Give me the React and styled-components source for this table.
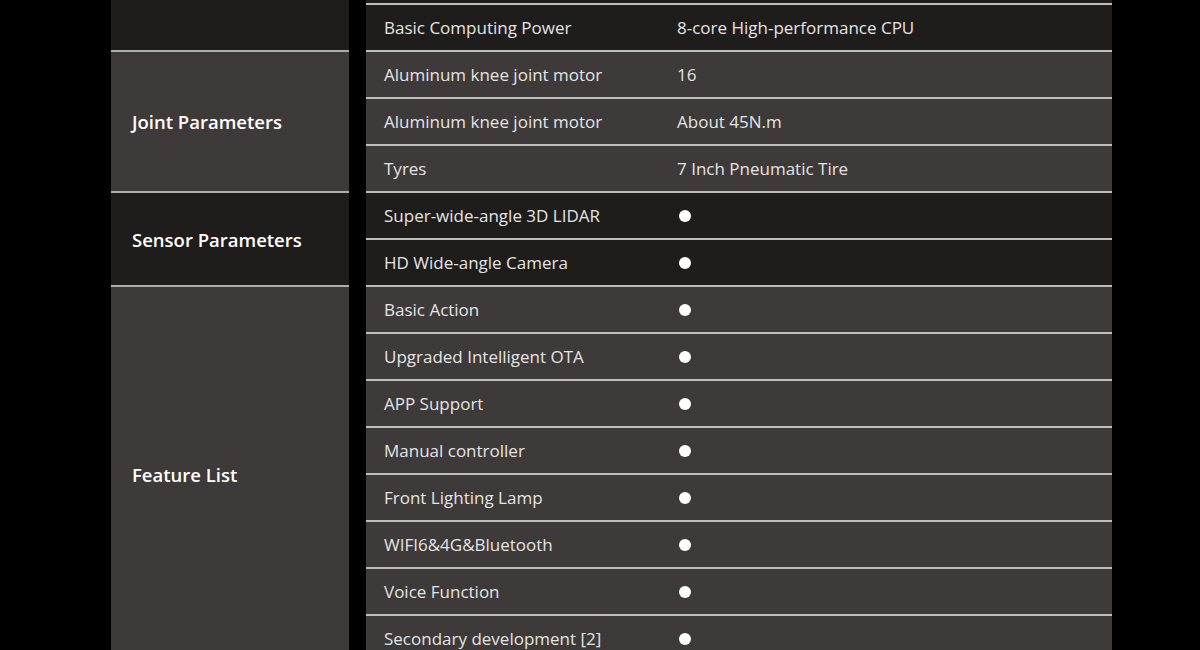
import styled, { createGlobalStyle } from 'styled-components';

// first group is scrolled above the window: only its last row shows
const specs = [
  {
    title: '',
    tone: 'dark',
    rows: [
      ['', ''],
      ['Basic Computing Power', '8-core High-performance CPU'],
    ],
  },
  {
    title: 'Joint Parameters',
    tone: 'light',
    rows: [
      ['Aluminum knee joint motor', '16'],
      ['Aluminum knee joint motor', 'About 45N.m'],
      ['Tyres', '7 Inch Pneumatic Tire'],
    ],
  },
  {
    title: 'Sensor Parameters',
    tone: 'dark',
    rows: [
      ['Super-wide-angle 3D LIDAR', true],
      ['HD Wide-angle Camera', true],
    ],
  },
  {
    title: 'Feature List',
    tone: 'light',
    rows: [
      ['Basic Action', true],
      ['Upgraded Intelligent OTA', true],
      ['APP Support', true],
      ['Manual controller', true],
      ['Front Lighting Lamp', true],
      ['WIFI6&4G&Bluetooth', true],
      ['Voice Function', true],
      ['Secondary development [2]', true],
    ],
  },
];

function App() {
  return (
    <>
      <GlobalStyle />
      <Page>
        <SpecTable>
          {specs.map((group, gIdx) => (
            <Group key={gIdx.toString()}>
              <GroupLabel $tone={group.tone}>{group.title}</GroupLabel>
              <Rows>
                {group.rows.map(([name, value], idx) => (
                  <Row key={idx.toString()} $tone={group.tone}>
                    <Name>{name}</Name>
                    <Value>{value === true ? <Dot /> : value}</Value>
                  </Row>
                ))}
              </Rows>
            </Group>
          ))}
        </SpecTable>
      </Page>
    </>
  );
}

export default App;

const GlobalStyle = createGlobalStyle`
  html, body {
    margin: 0;
    padding: 0;
    background: #000000;
    overflow: hidden;
  }
  body {
    font-family: "Open Sans", "Noto Sans", sans-serif;
  }
`;

const tones = {
  dark: '#1f1d1c',
  light: '#3e3a39',
};

const Page = styled.div`
  width: 1200px;
  height: 650px;
  overflow: hidden;
  background: #000000;
`;

const SpecTable = styled.div`
  margin: -44px 0 0 111px;
  width: 1001px;
  display: flex;
  flex-direction: column;
`;

const Group = styled.div`
  display: grid;
  grid-template-columns: 238px 746px;
  column-gap: 17px;
`;

const GroupLabel = styled.div`
  display: flex;
  align-items: center;
  padding-left: 21px;
  border-top: 2px solid #adadad;
  background-color: ${(p) => tones[p.$tone]};
  color: #ffffff;
  font-size: 18.5px;
  font-weight: 600;
`;

const Rows = styled.div`
  display: flex;
  flex-direction: column;
`;

const Row = styled.div`
  display: grid;
  grid-template-columns: 293px 1fr;
  align-items: center;
  height: 45px;
  padding-left: 18px;
  border-top: 2px solid #bdbdbd;
  background-color: ${(p) => tones[p.$tone]};
  color: #e4e4e4;
  font-size: 17px;
`;

const Name = styled.div`
  white-space: nowrap;
`;

const Value = styled.div`
  display: flex;
  align-items: center;
  white-space: nowrap;
`;

const Dot = styled.span`
  display: block;
  width: 12px;
  height: 12px;
  margin-left: 2px;
  border-radius: 50%;
  background: #ffffff;
`;
